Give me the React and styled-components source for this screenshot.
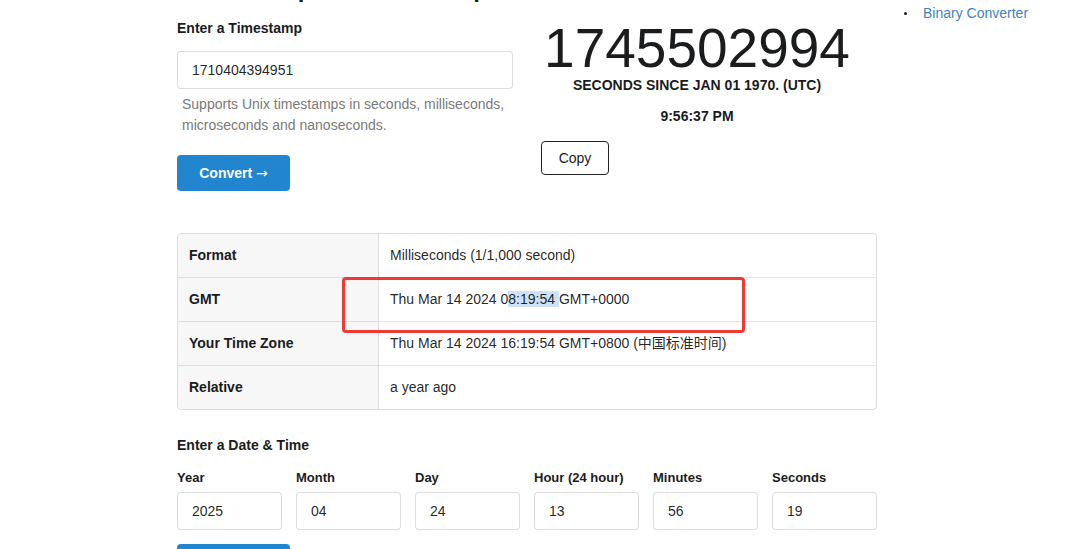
import React from "react";
import styled, { createGlobalStyle } from "styled-components";

const Global = createGlobalStyle`
  html, body { margin: 0; padding: 0; background: #fff; }
  body {
    font-family: "Liberation Sans", Arial, "Noto Sans CJK SC", sans-serif;
    font-size: 14px;
    color: rgba(0, 0, 0, 0.87);
    overflow: hidden;
  }
  * { box-sizing: border-box; }
`;

const Page = styled.div`
  display: flex;
  align-items: flex-start;
  padding-left: 177px;
  width: 1065px;
  height: 549px;
  overflow: hidden;
`;

const Main = styled.main`
  width: 700px;
  flex: none;
`;

const Title = styled.h1`
  margin: -23px 0 0 46px;
  height: 24px;
  font-size: 24px;
  line-height: 24px;
  font-weight: 700;
  white-space: nowrap;
  color: #1b1c1d;
`;

const Top = styled.div`
  display: grid;
  grid-template-columns: 336px 312px;
  column-gap: 28px;
  margin-top: 17px;
`;

const LeftCol = styled.div`
  display: flex;
  flex-direction: column;
  align-items: flex-start;
`;

const SectionLabel = styled.div`
  font-size: 14px;
  font-weight: 700;
  line-height: 20px;
  color: #1b1c1d;
  margin-top: ${(p) => p.$mt || 0}px;
`;

const TextInput = styled.input`
  display: block;
  width: ${(p) => p.$w || "100%"};
  height: 38px;
  margin-top: ${(p) => p.$mt || 0}px;
  padding: 0 14px 1px;
  border: 1px solid rgba(34, 36, 38, 0.15);
  border-radius: 4px;
  font-family: inherit;
  font-size: 14px;
  color: rgba(0, 0, 0, 0.87);
  background: #fff;
  outline: none;
`;

const Help = styled.p`
  margin: 5px 0 0 5px;
  font-size: 14px;
  line-height: 21px;
  color: #7a7a7a;
`;

const PrimaryButton = styled.button`
  display: block;
  width: 113px;
  height: 36px;
  margin-top: ${(p) => p.$mt || 0}px;
  border: none;
  border-radius: 4px;
  background: #2185d0;
  color: #fff;
  font-family: inherit;
  font-size: 14px;
  font-weight: 700;
  padding: 0;
  cursor: pointer;
`;

const Arrow = styled.span`
  font-family: "DejaVu Sans", sans-serif;
  font-weight: 400;
  font-size: 14px;
`;

const RightCol = styled.div`
  display: flex;
  flex-direction: column;
  align-items: center;
  text-align: center;
`;

const BigNumber = styled.div`
  font-size: 55px;
  line-height: 55px;
  margin-top: 3px;
  color: #1b1c1d;
`;

const Caption = styled.div`
  font-size: 14px;
  font-weight: 700;
  line-height: 20px;
  margin-top: ${(p) => p.$mt || 0}px;
  color: #1b1c1d;
`;

const OutlineButton = styled.button`
  align-self: flex-start;
  margin-top: 15px;
  width: 68px;
  height: 34px;
  border: 1px solid #222;
  border-radius: 4px;
  background: #fff;
  font-family: inherit;
  font-size: 14px;
  color: #1b1c1d;
  padding: 0;
`;

const TableWrap = styled.div`
  position: relative;
  margin-top: 42px;
`;

const Table = styled.table`
  width: 100%;
  border-collapse: separate;
  border-spacing: 0;
  border: 1px solid rgba(34, 36, 38, 0.15);
  border-radius: 4px;
  overflow: hidden;
`;

const Row = styled.tr`
  & + & > td {
    border-top: 1px solid rgba(34, 36, 38, 0.12);
  }
`;

const LabelCell = styled.td`
  width: 201px;
  padding: 12px 11px;
  line-height: 19px;
  font-weight: 700;
  background: #f7f7f7;
  border-right: 1px solid rgba(34, 36, 38, 0.12);
  color: #1b1c1d;
`;

const ValueCell = styled.td`
  padding: 12px 11px;
  line-height: 19px;
  color: rgba(0, 0, 0, 0.87);
`;

const Selected = styled.span`
  background: #cce2fa;
`;

const Highlight = styled.div`
  position: absolute;
  left: 165px;
  top: 44px;
  width: 403px;
  height: 56px;
  border: 3px solid #ee3a34;
  border-radius: 4px;
  pointer-events: none;
`;

const DateGrid = styled.div`
  display: grid;
  grid-template-columns: repeat(6, 105px);
  column-gap: 14px;
  margin-top: 14px;
`;

const Field = styled.div`
  display: flex;
  flex-direction: column;
`;

const FieldLabel = styled.label`
  font-size: 13px;
  font-weight: 700;
  line-height: 18px;
  color: #1b1c1d;
  margin-bottom: 5px;
  white-space: nowrap;
`;

const Sidebar = styled.ul`
  margin: 3px 0 0 13px;
  padding: 0;
  list-style: none;
`;

const SideItem = styled.li`
  display: flex;
  align-items: center;
  padding-left: 14px;
  line-height: 20px;
  font-size: 14px;
  &::before {
    content: "";
    width: 3px;
    height: 3px;
    border-radius: 50%;
    background: #1b1c1d;
    margin-right: 16px;
  }
`;

const SideLink = styled.a`
  color: #4183c4;
  text-decoration: none;
`;

const rows = [
  ["Format", "Milliseconds (1/1,000 second)"],
  ["GMT", null],
  ["Your Time Zone", "Thu Mar 14 2024 16:19:54 GMT+0800 (中国标准时间)"],
  ["Relative", "a year ago"],
];

const fields = [
  ["Year", "2025"],
  ["Month", "04"],
  ["Day", "24"],
  ["Hour (24 hour)", "13"],
  ["Minutes", "56"],
  ["Seconds", "19"],
];

export default function App() {
  return (
    <>
      <Global />
      <Page>
        <Main>
          <Title>Unix Epoch Timestamp</Title>
          <Top>
            <LeftCol>
              <SectionLabel>Enter a Timestamp</SectionLabel>
              <TextInput $mt={13} defaultValue="1710404394951" />
              <Help>
                Supports Unix timestamps in seconds, milliseconds,
                <br />
                microseconds and nanoseconds.
              </Help>
              <PrimaryButton $mt={19}>
                Convert <Arrow>→</Arrow>
              </PrimaryButton>
            </LeftCol>
            <RightCol>
              <BigNumber>1745502994</BigNumber>
              <Caption $mt={-1}>SECONDS SINCE JAN 01 1970. (UTC)</Caption>
              <Caption $mt={11}>9:56:37 PM</Caption>
              <OutlineButton>Copy</OutlineButton>
            </RightCol>
          </Top>

          <TableWrap>
            <Table>
              <tbody>
                {rows.map(([k, v]) => (
                  <Row key={k}>
                    <LabelCell>{k}</LabelCell>
                    <ValueCell>
                      {v ?? (
                        <>
                          Thu Mar 14 2024 0<Selected>8:19:54 </Selected>GMT+0000
                        </>
                      )}
                    </ValueCell>
                  </Row>
                ))}
              </tbody>
            </Table>
            <Highlight />
          </TableWrap>

          <SectionLabel $mt={25}>Enter a Date &amp; Time</SectionLabel>
          <DateGrid>
            {fields.map(([k, v]) => (
              <Field key={k}>
                <FieldLabel>{k}</FieldLabel>
                <TextInput defaultValue={v} />
              </Field>
            ))}
          </DateGrid>
          <PrimaryButton $mt={14}>
            Convert <Arrow>→</Arrow>
          </PrimaryButton>
        </Main>
        <Sidebar>
          <SideItem>
            <SideLink href="#">Binary Converter</SideLink>
          </SideItem>
        </Sidebar>
      </Page>
    </>
  );
}
